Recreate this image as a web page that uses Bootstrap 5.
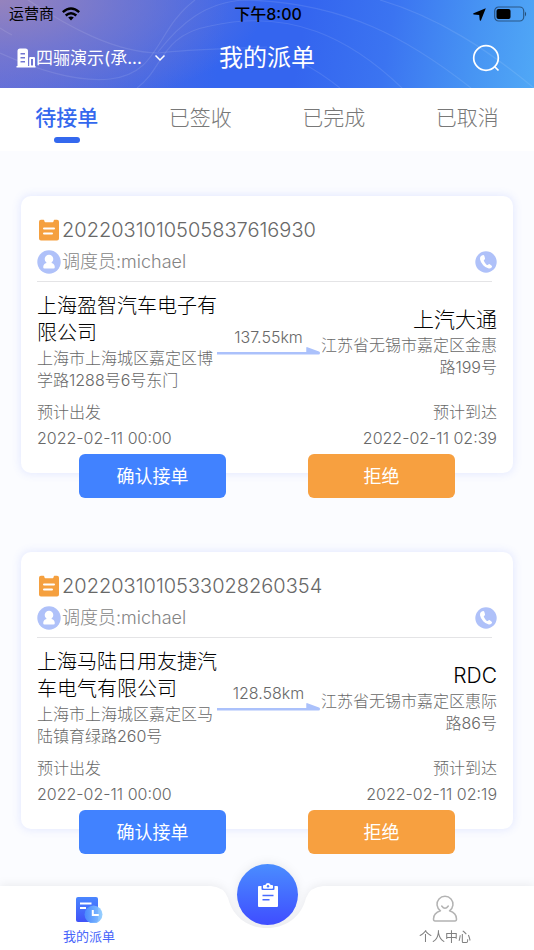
<!DOCTYPE html>
<html lang="zh-CN">
<head>
<meta charset="utf-8">
<meta name="viewport" content="width=device-width, initial-scale=1">
<title>我的派单</title>
<link href="https://cdn.jsdelivr.net/npm/bootstrap@5.3.0/dist/css/bootstrap.min.css" rel="stylesheet">
<style>
  body { font-family: Inter, "Noto Sans CJK SC", sans-serif; font-weight: 300; background: #fbfcff; color: #686868; font-size: 16px; line-height: 22px; }
  svg { display: block; flex: none; }
  .app-head { background: radial-gradient(ellipse 50% 130% at 0 0, #9583bd 0, rgba(131,125,201,.65) 45%, rgba(100,110,220,0) 100%), linear-gradient(100deg, #5d6bdc 0, #4a69e2 22%, #3465ef 42%, #3465ef 56%, #3b74f1 72%, #4794f3 88%, #50a8f6 100%); color: #fff; }
  .head-lines { z-index: 0; }
  .status-row { height: 28px; padding: 0 7px 0 9px; color: #000; font-size: 15px; font-weight: 400; }
  .status-time { font-size: 16px; font-weight: 500; }
  .title-row { height: 60px; padding: 0 16px; }
  .org-select { appearance: none; background: none; border: 0; color: #fff; font-size: 17px; line-height: 28px; width: 110px; padding: 0; font-weight: 400; }
  .page-title { font-size: 24px; line-height: 32px; font-weight: 400; }
  .search-btn { margin-right: 18px; }
  .tab-row { height: 63px; background: #fff; }
  .tab-row .tab-item { position: relative; font-size: 21px; line-height: 28px; color: #787878; padding: 16px 0 19px; border: 0; border-radius: 0; background: none; }
  .tab-row .tab-item.active { color: #3468ee; font-weight: 500; background: none; }
  .tab-item.active::after { content: ""; position: absolute; left: 50%; bottom: 8px; width: 26px; height: 6px; margin-left: -13px; border-radius: 3px; background: #3468ee; }
  .orders { padding: 45px 21px 96px; }
  .order + .order { margin-top: 54px; }
  .order-card { border: 0; border-radius: 10px; box-shadow: 0 0 8px 1px rgba(75,105,255,.13); padding: 21px 16px 20px; min-height: 277px; }
  .order-no { font-size: 20px; line-height: 26px; gap: 3px; padding-left: 2px; }
  .agent { font-size: 18px; line-height: 26px; color: #848484; gap: 1px; margin-top: 6px; padding-bottom: 6px; border-bottom: 1px solid #e4e4e6; margin-right: 5px; }
  .agent .call { margin-right: -5px; }
  .route { margin-top: 11px; }
  .place-from { flex: 0 0 180px; }
  .place-to { flex: 0 0 177px; }
  .place-name { color: #000; font-size: 20px; line-height: 27px; font-weight: 300; }
  .place-to .place-name { font-size: 21px; line-height: 28px; }
  .distance { line-height: 20px; padding-bottom: 3px; }
  .distance svg { width: 100%; height: 8px; }
  .times { margin-top: 8px; line-height: 26px; }
  .order-actions { margin-top: -19px; padding: 0 17px; position: relative; }
  .act { width: 147px; height: 44px; border: 0; border-radius: 6px; color: #fff; font-size: 18px; padding: 0; }
  .act-accept { background: #4182ff; }
  .act-refuse { background: #f7a040; }
  .act:hover { color: #fff; filter: brightness(.95); }
  .dock { height: 64px; filter: drop-shadow(0 -1px 5px rgba(0,0,0,.07)); }
  .dock-side { background: #fff; flex: 1 1 0; }
  .dock-link { font-size: 13px; line-height: 18px; color: #808080; width: 33.333vw; max-width: 100%; padding-top: 9px; gap: 4px; text-decoration: none; font-weight: 400; }
  .dock-link.active { color: #4865fa; }
  .dock-main { position: absolute; left: 50%; top: -22px; width: 61px; height: 61px; margin-left: -30px; border: 0; border-radius: 50%; background: linear-gradient(#4a8dff, #3f4dff); }
</style>
<script src="https://cdn.jsdelivr.net/npm/bootstrap@5.3.0/dist/js/bootstrap.bundle.min.js"></script>
</head>
<body>
<svg width="0" height="0" class="position-absolute" aria-hidden="true">
  <symbol id="i-order" viewBox="0 0 20 22"><path d="M2 .8h2.500q.7 0 .9 1.200.2 1.300 1 1.300h7.200q.8 0 1-1.300Q14.800.8 15.500.8H18q2 0 2 2v16.700q0 2-2 2H2q-2 0-2-2V2.800q0-2 2-2Z" fill="#f5a03f"/><path d="M5 9.500h10M5 14.500h8" stroke="#fff" stroke-width="2" stroke-linecap="round"/></symbol>
  <symbol id="i-agent" viewBox="0 0 24 24"><circle cx="12" cy="12" r="11.700" fill="#afc1f9"/><circle cx="12" cy="9" r="4.300" fill="#fff"/><path d="M9.500 11h5v2q3.300.8 3.300 4.200 0 1.300-1.300 1.300h-9q-1.300 0-1.300-1.300 0-3.400 3.300-4.200Z" fill="#fff"/></symbol>
  <symbol id="i-phone" viewBox="0 0 22 22"><circle cx="11" cy="11" r="10.700" fill="#afc1f9"/><path d="M7.400 4.200 6 5Q4.800 6 5 8.200q.6 3.300 3.200 6 2.700 2.800 5.600 3.300 1.700.2 2.800-1 .9-1 .1-1.800l-1.900-1.500q-.8-.5-1.500.2-.9.9-1.500.5Q9.800 12.300 8.800 9.800q-.2-.7.600-1.100.9-.5.600-1.400L9.300 4.800q-.5-1.200-1.900-.6Z" fill="#fff"/></symbol>
  <symbol id="i-arrow" viewBox="0 0 105 8" preserveAspectRatio="none"><path d="M0 5h91V1q0-1.200 1.200-.8L104 4.600q1 .5 1 1.400 0 1.500-1.500 1.500H0Z" fill="#abc1fb"/></symbol>
</svg>

<header class="app-head position-relative">
  <svg class="head-lines position-absolute top-0 start-0 w-100 h-100" viewBox="0 0 534 88" preserveAspectRatio="none" fill="none" stroke="#fff" stroke-opacity=".1" stroke-width="1.200" aria-hidden="true"><path d="M0 53C42 72 80 82 110 79C160 74 155 30 195 0"/><path d="M28 0C70 28 115 52 158 53C190 49 220 49 267 47"/><path d="M0 28C3 30 8 33 12 35"/><path d="M137 88C163 70 160 35 210 26C290 8 350 38 402 88"/><path d="M158 52C180 24 205 2 245 0C345 2 410 40 471 88M380 0C438 17 488 50 534 88M300 62Q320 72 340 88"/></svg>
  <div class="status-row position-relative d-flex align-items-center">
    <div class="col d-flex align-items-center gap-2"><span>运营商</span>
      <svg width="18" height="14" viewBox="0 0 18 14" aria-label="Wi-Fi"><g fill="none" stroke="#000" stroke-width="2.400"><path d="M.8 5.200q8.200-7.500 16.400 0M3.700 8.500q5.300-4.700 10.600 0"/></g><path d="M6.200 10.600q2.800-2.400 5.600 0L9 13.500Z"/></svg></div>
    <div class="status-time">下午8:00</div>
    <div class="col d-flex align-items-center justify-content-end gap-2">
      <svg width="13" height="13" viewBox="0 0 13 13" aria-hidden="true"><path d="M12.800.2 8 12.300q-.8 1.200-1.300-.2L6.200 6.900.9 6.500Q-.4 6.200.6 5.300Z"/></svg>
      <svg width="33" height="16" viewBox="0 0 33 16" aria-label="电量"><rect x=".7" y="1" width="29" height="14" rx="4" fill="none" stroke="#000" stroke-opacity=".45" stroke-width="1.200"/><rect x="2.500" y="3" width="14" height="10" rx="2"/><path d="M31 5.500q2.300 2.500 0 5Z" opacity=".5"/></svg></div>
  </div>
  <div class="title-row position-relative d-flex align-items-center">
    <div class="col d-flex align-items-center">
      <svg width="20" height="20" viewBox="0 0 20 20" aria-hidden="true"><path fill="#fff" fill-rule="evenodd" d="M1.500 18V3Q1.500.5 4 .5h5.500Q12 .5 12 3v15h1.200V10q0-1 1-1h3.800q1 0 1 1v8h.5v1.500H.5V18ZM4.500 5v1.500h4.500V5Zm0 4v1.500h4.500V9Zm0 4v1.500h4.500V13ZM15 11v6.500h2V11Z"/></svg>
      <select id="org" class="org-select" aria-label="承运单位"><option>四骊演示(承...</option></select>
      <svg width="12" height="8" viewBox="0 0 12 8" fill="none" stroke="#fff" stroke-width="1.500" class="ms-2" aria-hidden="true"><path d="m1.500 1.500 4.500 4.500 4.500-4.500"/></svg>
    </div>
    <h1 class="page-title m-0">我的派单</h1>
    <div class="col d-flex justify-content-end">
      <button class="search-btn btn p-0 border-0" type="button" aria-label="搜索"><svg width="28" height="28" viewBox="0 0 28 28" fill="none" stroke="#fff" stroke-width="1.700"><circle cx="14" cy="14" r="12.300"/><path d="m22.500 22.500 4 4"/></svg></button></div>
  </div>
</header>

<nav class="tab-row nav nav-fill flex-nowrap" aria-label="派单状态">
  <button type="button" class="tab-item nav-link col active">待接单</button>
  <button type="button" class="tab-item nav-link col">已签收</button>
  <button type="button" class="tab-item nav-link col">已完成</button>
  <button type="button" class="tab-item nav-link col">已取消</button>
</nav>

<main class="orders">
  <article class="order">
    <div class="order-card card">
      <div class="order-no d-flex align-items-center"><svg width="20" height="22" aria-hidden="true"><use href="#i-order"/></svg><span>2022031010505837616930</span></div>
      <div class="agent d-flex align-items-center"><svg width="24" height="24" aria-hidden="true"><use href="#i-agent"/></svg><span>调度员:michael</span>
        <button class="call btn p-0 border-0 ms-auto" type="button" aria-label="拨打电话"><svg width="22" height="22"><use href="#i-phone"/></svg></button></div>
      <div class="route d-flex align-items-center">
        <div class="place-from"><h2 class="place-name m-0">上海盈智汽车电子有限公司</h2><div>上海市上海城区嘉定区博学路1288号6号东门</div></div>
        <div class="distance flex-fill text-center"><span>137.55km</span><svg aria-hidden="true"><use href="#i-arrow"/></svg></div>
        <div class="place-to text-end"><h2 class="place-name m-0">上汽大通</h2><div>江苏省无锡市嘉定区金惠路199号</div></div>
      </div>
      <div class="times d-flex justify-content-between">
        <div><div>预计出发</div><time datetime="2022-02-11T00:00">2022-02-11 00:00</time></div>
        <div class="text-end"><div>预计到达</div><time datetime="2022-02-11T02:39">2022-02-11 02:39</time></div>
      </div>
    </div>
    <div class="order-actions d-flex justify-content-around"><button type="button" class="act act-accept btn">确认接单</button><button type="button" class="act act-refuse btn">拒绝</button></div>
  </article>

  <article class="order">
    <div class="order-card card">
      <div class="order-no d-flex align-items-center"><svg width="20" height="22" aria-hidden="true"><use href="#i-order"/></svg><span>2022031010533028260354</span></div>
      <div class="agent d-flex align-items-center"><svg width="24" height="24" aria-hidden="true"><use href="#i-agent"/></svg><span>调度员:michael</span>
        <button class="call btn p-0 border-0 ms-auto" type="button" aria-label="拨打电话"><svg width="22" height="22"><use href="#i-phone"/></svg></button></div>
      <div class="route d-flex align-items-center">
        <div class="place-from"><h2 class="place-name m-0">上海马陆日用友捷汽车电气有限公司</h2><div>上海市上海城区嘉定区马陆镇育绿路260号</div></div>
        <div class="distance flex-fill text-center"><span>128.58km</span><svg aria-hidden="true"><use href="#i-arrow"/></svg></div>
        <div class="place-to text-end"><h2 class="place-name m-0">RDC</h2><div>江苏省无锡市嘉定区惠际路86号</div></div>
      </div>
      <div class="times d-flex justify-content-between">
        <div><div>预计出发</div><time datetime="2022-02-11T00:00">2022-02-11 00:00</time></div>
        <div class="text-end"><div>预计到达</div><time datetime="2022-02-11T02:19">2022-02-11 02:19</time></div>
      </div>
    </div>
    <div class="order-actions d-flex justify-content-around"><button type="button" class="act act-accept btn">确认接单</button><button type="button" class="act act-refuse btn">拒绝</button></div>
  </article>
</main>

<nav class="dock fixed-bottom d-flex" aria-label="主导航">
  <div class="dock-side"><a href="#" class="dock-link active d-flex flex-column align-items-center">
    <svg width="28" height="28" viewBox="0 0 28 28" aria-hidden="true"><defs><linearGradient id="g1" x2="0" y2="1"><stop stop-color="#4a86ff"/><stop offset="1" stop-color="#4052f8"/></linearGradient><linearGradient id="g2"><stop stop-color="#4a8cff"/><stop offset="1" stop-color="#8fccff"/></linearGradient></defs><rect x="1" y="2" width="22" height="25" rx="2" fill="url(#g1)"/><path d="M5 8.500h11.500M5 13h6" stroke="#fff" stroke-width="2"/><circle cx="18.500" cy="19.500" r="9" fill="url(#g2)" opacity=".92"/><path d="M17.800 15v5h6" fill="none" stroke="#fff" stroke-width="2"/></svg>
    <span>我的派单</span></a></div>
  <svg width="112" height="64" viewBox="0 0 112 64" aria-hidden="true"><path fill="#fff" d="M0 0Q13 1 17 12C22 32 38 42 56 42S90 32 95 12Q99 1 112 0V64H0Z"/></svg>
  <div class="dock-side"><a href="#" class="dock-link ms-auto d-flex flex-column align-items-center">
    <svg width="28" height="28" viewBox="0 0 28 28" fill="none" stroke="#b3b3b3" stroke-width="1.500" stroke-linejoin="round" aria-hidden="true"><path d="M9.500 15.800A8 8 0 1 1 18.500 15.800Q25.500 18 25.500 24 25.500 26 24 26H4Q2.500 26 2.500 24 2.500 18 9.500 15.800Z"/><path d="M10.700 11q3.300 4.500 6.600 0" stroke-linecap="round"/></svg>
    <span>个人中心</span></a></div>
  <button type="button" class="dock-main d-flex align-items-center justify-content-center p-0" aria-label="新建派单"><svg width="20" height="24" viewBox="0 0 20 24" aria-hidden="true"><path d="M1 3h2.500v3q0 1 1 1h11q1 0 1-1V3H19q1 0 1 1v19q0 1-1 1H1q-1 0-1-1V4q0-1 1-1Z" fill="#fff"/><path d="M5 5V3q0-1 1-1h1.300Q8 0 10 0t2.700 2H14q1 0 1 1v2q0 .8-1 .8H6Q5 5.800 5 5Z" fill="#fff"/><circle cx="10" cy="3.200" r="1.200" fill="#4777ff"/><path d="M4.500 12.500h11M4.500 16.800h7" stroke="#476bff" stroke-width="1.500"/></svg></button>
</nav>
</body>
</html>
